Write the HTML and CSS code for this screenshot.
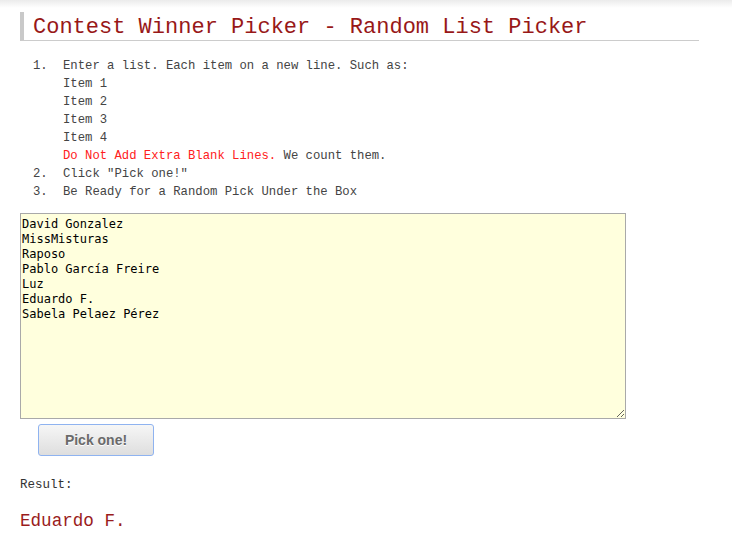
FILE: index.html
```html
<!DOCTYPE html>
<html>
<head>
<meta charset="utf-8">
<link rel="stylesheet" href="styles.css">
</head>
<body>
<div class="shade"></div>
<main class="page">
  <h1 class="title">Contest Winner Picker - Random List Picker</h1>
  <ol class="steps">
    <li><span class="num">1.</span><span class="txt">Enter a list. Each item on a new line. Such as:<br>Item 1<br>Item 2<br>Item 3<br>Item 4<br><span class="warn">Do Not Add Extra Blank Lines.</span> We count them.</span></li>
    <li><span class="num">2.</span><span class="txt">Click "Pick one!"</span></li>
    <li><span class="num">3.</span><span class="txt">Be Ready for a Random Pick Under the Box</span></li>
  </ol>
  <textarea class="names">David Gonzalez
MissMisturas
Raposo
Pablo García Freire
Luz
Eduardo F.
Sabela Pelaez Pérez</textarea>
  <div class="actions"><button class="pick">Pick one!</button></div>
  <div class="result-label">Result:</div>
  <div class="result">Eduardo F.</div>
</main>
</body>
</html>
```
FILE: styles.css
```css
html, body {
  margin: 0;
  padding: 0;
  background: #fff;
}
.shade {
  height: 8px;
  background: linear-gradient(#ebebeb, #ffffff);
}
.page {
  padding-left: 20px;
  font-family: "Liberation Mono", monospace;
}
.title {
  margin: 4px 0 0 0;
  width: 666px;
  border-left: 4px solid #c9c9c9;
  border-bottom: 1px solid #cccccc;
  padding-left: 9px;
  font-family: "Liberation Mono", monospace;
  font-weight: normal;
  font-size: 22px;
  line-height: 32px;
  height: 28px;
  overflow: visible;
  color: #981818;
}
.steps {
  list-style: none;
  margin: 16px 0 0 0;
  padding: 0 0 0 13px;
  font-size: 12.25px;
  line-height: 18px;
  color: #444;
}
.steps li {
  display: flex;
}
.num {
  width: 30px;
  flex: none;
}
.warn {
  color: #ff2020;
}
.names {
  display: block;
  margin: 12px 0 0 0;
  box-sizing: border-box;
  width: 606px;
  height: 206px;
  border: 1px solid #a9a9a9;
  background: #ffffdd;
  padding: 3px 1px 1px 1px;
  font-family: "DejaVu Sans Mono", monospace;
  font-size: 12px;
  line-height: 15px;
  color: #000;
  resize: both;
}
.actions {
  padding: 5px 0 0 18px;
}
.pick {
  box-sizing: border-box;
  width: 116px;
  height: 32px;
  border: 1px solid #8fb3f0;
  border-radius: 3px;
  background: linear-gradient(#f6f6f6, #dedede);
  font-family: "Liberation Sans", Arial, sans-serif;
  font-weight: bold;
  font-size: 14px;
  color: #6a6a6a;
  text-shadow: 0 1px 0 #fff;
}
.result-label {
  margin-top: 21px;
  font-size: 12.5px;
  line-height: 16px;
  color: #333;
}
.result {
  margin-top: 17px;
  font-size: 17.6px;
  line-height: 22px;
  color: #9a1c1c;
}
```
